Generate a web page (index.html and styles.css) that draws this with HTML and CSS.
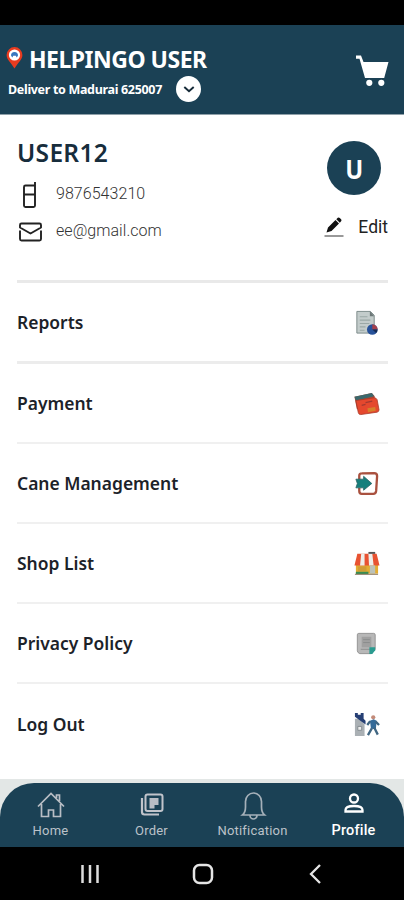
FILE: index.html
```html
<!DOCTYPE html>
<html lang="en">
<head>
<meta charset="utf-8">
<title>Helpingo User</title>
<link rel="stylesheet" href="styles.css">
</head>
<body>
<div class="status"></div>
<header class="top">
  <div class="brand">
    <div class="brand-row">
      <svg width="17" height="22" viewBox="0 0 17 22"><path d="M8.5 21.5C5 15.500.6 12.500.6 8a7.900 7.900 0 0 1 15.800 0c0 4.500-4.400 7.500-7.900 13.500z" fill="#e83b1f"/><circle cx="8.500" cy="8" r="5.600" fill="#fff"/><path d="M5 8.500a3.500 3.500 0 0 1 7 0l-1.200 2-1-1.700H7.300l-1 1.700z" fill="#3978c0"/></svg>
      <h1 class="title">HELPINGO USER</h1>
    </div>
    <div class="deliver-row">
      <span class="deliver">Deliver to Madurai 625007</span>
      <span class="chev"><svg width="12" height="7" viewBox="0 0 12 7"><path d="M1.300 1 6 5.300 10.700 1" fill="none" stroke="#152a38" stroke-width="1.900"/></svg></span>
    </div>
  </div>
  <svg class="cart" width="34" height="32" viewBox="0 0 34 32"><path d="M1 .5h5l2.500 6.500H33.500l-4.300 16H10L4.500 3.800H1z" fill="#fff"/><circle cx="14.300" cy="27.800" r="3.100" fill="#fff"/><circle cx="26.300" cy="27.800" r="3.100" fill="#fff"/></svg>
</header>
<main class="content">
  <section class="user">
    <div class="info">
      <h2 class="name">USER12</h2>
      <div class="line phone"><svg width="26" height="28" viewBox="0 0 26 28"><path d="M18 1v23.500q0 1.500-1.500 1.500h-8Q7 26 7 24.500V6q0-1.500 1.500-1.500H18M7 13.500h11" fill="none" stroke="#222" stroke-width="1.900"/></svg><span>9876543210</span></div>
      <div class="line mail"><svg width="26" height="22" viewBox="0 0 26 22"><path d="M3 6.500V4q0-1.500 1.500-1.500h18Q24 2.500 24 4v2.500L13.500 12.500z" fill="none" stroke="#222" stroke-width="1.900" stroke-linejoin="round"/><path d="M3 9.500v8.500q0 1.500 1.500 1.500h18q1.500 0 1.500-1.500V9.500" fill="none" stroke="#222" stroke-width="1.900"/></svg><span>ee@gmail.com</span></div>
    </div>
    <div class="side">
      <div class="avatar"><span>U</span></div>
      <div class="edit"><svg width="20" height="21" viewBox="0 0 20 21"><path d="M2.500 15.500 4 10.500 11.500 3l3.500 3.500L7.500 14zM12.300 2.200 13.800.8q1-.8 2 .2l1.300 1.300q.9 1 0 1.900L15.800 5.700z" fill="#111"/><path d="M.5 19h19" stroke="#999" stroke-width="2"/></svg><span>Edit</span></div>
    </div>
  </section>
  <ul class="menu">
    <li><span>Reports</span><svg viewBox="0 0 28 28"><path d="M4 2.500h14l4 4V25H4z" fill="#c3cccb" stroke="#7b8988"/><path d="M17.500 2v5.500H22" fill="#6c7777"/><path d="M7 8h8M7 11.500h11M7 15h10M7 18.500h6M7 22h5" stroke="#9ba8a6" stroke-width="1.200"/><circle cx="20" cy="21.300" r="5.500" fill="#27529a"/><path d="M20 21.300v-5.500a5.500 5.500 0 0 1 5.500 5.500z" fill="#a5404c"/><path d="m20 21.300 4 3.700q1.500-1.600 1.500-3.700z" fill="#142b55"/></svg></li>
    <li><span>Payment</span><svg viewBox="0 0 28 28"><path d="m1.500 7 18-4 3 3.500v9L4 20z" fill="#ad4934"/><path d="m1.500 7 18-4 2.500 3.500L3 11z" fill="#3b686c"/><path d="m3 11 19-3q2 0 3 2l2 10.500q0 2-2 2.500L8 25.500q-2 0-2.500-2z" fill="#e5482e" stroke="#a63827" stroke-width=".8"/><path d="m13 13 7-1.500M9 16l4-1" stroke="#a33931" stroke-width="1.300"/><path d="m15 19 8-1.500.6 4L15.500 23z" fill="#d6802b"/></svg></li>
    <li><span>Cane Management</span><svg viewBox="0 0 28 28"><path d="M6.500 10V6q0-2.500 2.500-2.500l13-.3q3 0 3 3l-1 15.500q-.3 3-3 3H9q-2.500 0-2.500-3v-3" fill="#fff" stroke="#a9513f" stroke-width="2.400"/><path d="M3 9.500h8V6.500L19.500 14l-8.500 7v-2.500H3L4.500 14z" fill="#157f7c" stroke="#286163" stroke-width=".8"/></svg></li>
    <li><span>Shop List</span><svg viewBox="0 0 28 28"><path d="M3 11h23v13.500H3z" fill="#e4ad32"/><path d="M4.500 4h20l3 12h-26z" fill="#e85332"/><path d="m8.500 4-1.200 12h4.700V4zm7.500 0 .6 12h4.800L20 4z" fill="#eeeeea"/><path d="M5 17h9v5H5z" fill="#d19c35"/><path d="M17.500 16h5.500v8.500h-5.500z" fill="#bcc2b9"/><path d="M3 23.800h13" stroke="#398d52" stroke-width="2.500"/><path d="M2 25.200h24" stroke="#86745b"/><path d="M16 3h7" stroke="#555" stroke-width="2"/></svg></li>
    <li><span>Privacy Policy</span><svg viewBox="0 0 28 28"><path d="M6 3.500h15.500q1.500 0 1.500 1.500v15l-4 4.500H7q-2.500-1-2.500-3V5q0-1.500 1.500-1.500z" fill="#b8b8b8" stroke="#939393"/><path d="M9 7h10v11H9z" fill="#a0a0a0"/><path d="M10.500 10h7M10.500 13h7M8 20h10" stroke="#8a8d8d"/><path d="M17 18h6v3l-3 4h-3z" fill="#2b9b90"/></svg></li>
    <li><span>Log Out</span><svg viewBox="0 0 28 28"><path d="M2 8h5l5 6v12H2z" fill="#aab0b4"/><path d="M2 2h3v2h3V2h3v6l2 2v4L2 6z" fill="#263f74"/><path d="M5 16h4v4H5z" fill="#eee" stroke="#848b90"/><circle cx="21" cy="6.500" r="2.200" fill="#c38b79"/><path d="m17.500 10 4-1.500 3 1.500-.8 9-5-.5z" fill="#356b99"/><path d="m17.800 10.500-3 4m8.700-3.500 3.500 3.500M19.500 18 15.500 25m6.500-8 3.700 7.500" fill="none" stroke="#406682" stroke-width="2.400"/></svg></li>
  </ul>
</main>
<div class="nav-wrap">
<nav class="nav">
  <a class="tab"><svg width="30" height="30" viewBox="0 0 30 30"><path d="m2 16.500 13-13 13 13M5.500 14v12.500h7V20h5v6.500h7V14M20.500 8V5h3v6" fill="none" stroke="#b9bec5" stroke-width="1.700"/></svg><span>Home</span></a>
  <a class="tab"><svg width="30" height="30" viewBox="0 0 30 30"><rect x="8.500" y="4.500" width="17" height="16.500" rx="2" fill="none" stroke="#c1c4cb" stroke-width="2"/><path d="M5 8v14q0 2.500 2.500 2.500H22" fill="none" stroke="#c1c4cb" stroke-width="2.200"/><path d="M12.500 8h9v7h-4v3.500h-5z" fill="#b9bdc5"/></svg><span>Order</span></a>
  <a class="tab"><svg width="30" height="30" viewBox="0 0 30 30"><path d="M4.500 25q3-2.500 3-8v-5.500a8 8.500 0 0 1 16 0v5.500q0 5.500 3 8zM12 25.500a3.500 3.500 0 0 0 7 0" fill="none" stroke="#a5b0b9" stroke-width="1.700"/></svg><span>Notification</span></a>
  <a class="tab active"><svg width="30" height="30" viewBox="0 0 30 30"><circle cx="15" cy="8.500" r="4" fill="none" stroke="#fff" stroke-width="2.300"/><path d="M6.500 21.500V20q0-4 8.500-4t8.500 4v1.500z" fill="none" stroke="#fff" stroke-width="2.300"/></svg><span>Profile</span></a>
</nav>
</div>
<footer class="system">
  <svg width="20" height="20" viewBox="0 0 20 20"><path d="M2.500 1v18M10 1v18M17.500 1v18" stroke="#ddd" stroke-width="2.500"/></svg>
  <svg width="22" height="22" viewBox="0 0 22 22"><rect x="2" y="2" width="18" height="18" rx="5.500" fill="none" stroke="#e5e5e5" stroke-width="2.500"/></svg>
  <svg width="14" height="20" viewBox="0 0 14 20"><path d="M12 1 3 10l9 9" fill="none" stroke="#e5e5e5" stroke-width="2.300"/></svg>
</footer>
</body>
</html>
```
FILE: styles.css
```css
* { box-sizing: border-box; }
body { margin: 0; width: 404px; height: 900px; display: flex; flex-direction: column; overflow: hidden; background: #fff; font-family: "Noto Sans", sans-serif; white-space: nowrap; }
svg { display: block; flex: none; }
h1, h2 { margin: 0; }
.status { height: 25px; background: #000; }
.top { height: 90px; background: #1b4155; display: flex; justify-content: space-between; color: #fff; border-bottom: 1px solid #8fa0a9; }
.brand { padding: 20px 0 0 6px; }
.brand-row { display: flex; align-items: center; height: 28px; gap: 6px; }
.brand-row svg { margin-top: -3px; }
.title { font-size: 23px; line-height: 28px; font-weight: 700; letter-spacing: -0.500px; }
.deliver-row { display: flex; align-items: center; height: 32px; padding-left: 2px; gap: 14px; }
.deliver { width: 154px; font-size: 12.500px; font-weight: 700; letter-spacing: -0.320px; }
.chev { width: 25px; height: 26px; border-radius: 50%; background: #fff; display: flex; align-items: center; justify-content: center; }
.cart { margin: 30px 15px 0 0; }
.content { padding: 0 16px 0 17px; height: 664px; }
.user { height: 168px; display: flex; justify-content: space-between; border-bottom: 3px solid #e9e9e9; }
.info { padding-top: 22px; }
.name { font-size: 24.500px; line-height: 32px; font-weight: 600; letter-spacing: .3px; color: #172d3c; }
.line { display: flex; align-items: center; gap: 13px; font: 300 16px/28px Roboto, sans-serif; letter-spacing: .05px; color: #333; }
.phone { height: 28px; margin-top: 12px; }
.phone span { margin-top: -3px; }
.mail { height: 24px; margin-top: 11px; }
.mail span { margin-top: -2px; }
.side { width: 66px; display: flex; flex-direction: column; align-items: flex-end; }
.avatar { width: 54px; height: 54px; margin: 26px 7px 0 0; border-radius: 50%; background: #1b4155; color: #fff; display: flex; align-items: center; justify-content: center; font: 700 27px/1 "Noto Sans", sans-serif; }
.avatar span { transform: scaleX(.88); }
.edit { display: flex; align-items: center; gap: 14px; margin-top: 20px; height: 24px; font: 400 17.500px/24px Roboto, sans-serif; color: #222; }
.menu { margin: 0; padding: 0; list-style: none; }
.menu li { height: 80px; display: flex; align-items: center; justify-content: space-between; border-bottom: 2px solid #f0f0f0; font-size: 18.500px; font-weight: 600; color: #1c2229; }
.menu li:first-child { height: 81px; border-bottom: 3px solid #ececec; }
.menu li:last-child { border: 0; }
.menu span { margin-top: -2px; transform: scaleX(.943); transform-origin: left; }
.menu svg { width: 27px; height: 27px; margin-right: 8px; }
.nav-wrap { height: 68px; padding-top: 4px; background: #e3e7e6; }
.nav { height: 64px; background: #1b4155; border-radius: 34px 34px 0 0; display: grid; grid-template-columns: repeat(4, 1fr); }
.tab { display: flex; flex-direction: column; align-items: center; padding-top: 7px; color: #bbc2c9; font: 400 13px/18px Roboto, sans-serif; }
.tab span { margin-top: 2px; letter-spacing: .2px; }
.active { color: #fff; }
.active span { font-size: 14.500px; font-weight: 500; }
.system { height: 53px; background: #000; display: flex; align-items: center; padding-left: 80px; }
.system svg:nth-child(2) { margin-left: 92px; }
.system svg:nth-child(3) { margin-left: 94px; }
```
